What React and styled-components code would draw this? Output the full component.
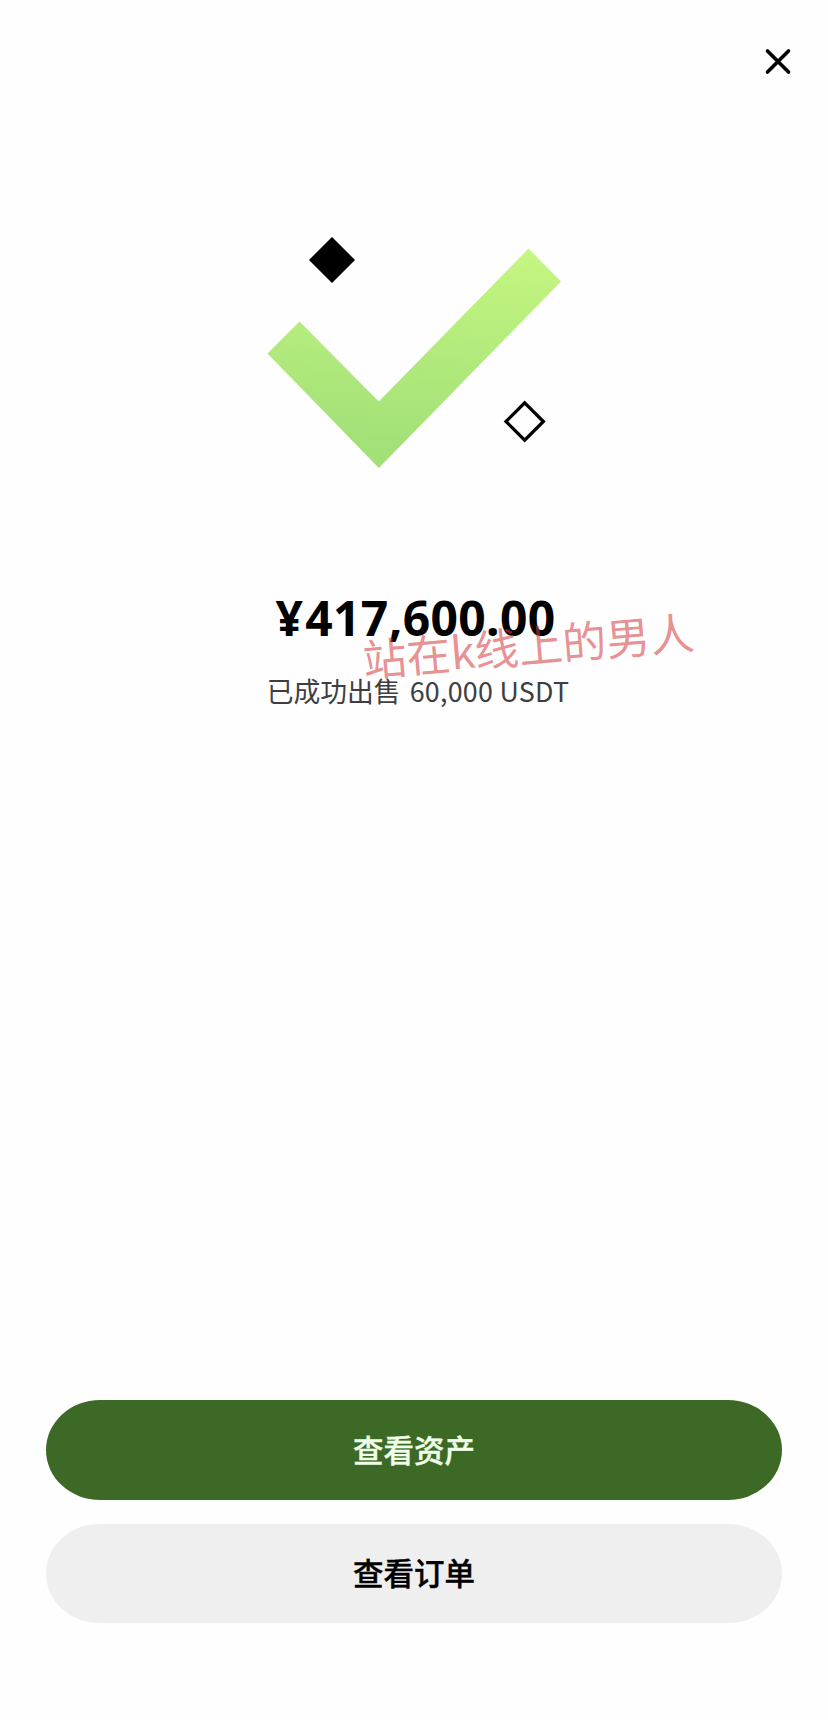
import React from "react";
import styled, { createGlobalStyle } from "styled-components";

const GlobalStyle = createGlobalStyle`
	* {
		box-sizing: border-box;
	}
	body {
		margin: 0;
		background-color: rgb(254, 254, 254);
		font-family: "Noto Sans CJK SC", sans-serif;
	}
`;

const Page = styled.main`
	display: flex;
	flex-flow: column nowrap;
	width: 828px;
	height: 1720px;
	padding: 0 46px 97px 46px;
	overflow: hidden;
`;

const Header = styled.header`
	display: flex;
	justify-content: flex-end;
	height: 222px;
	padding-top: 41px;
	margin-right: -17px;
`;

const CloseButton = styled.button`
	display: flex;
	justify-content: center;
	align-items: center;
	width: 42px;
	height: 42px;
	padding: 0;
	border: none;
	background: none;
	cursor: pointer;
`;

const Illustration = styled.svg`
	align-self: center;
	width: 340px;
	height: 260px;
`;

const Result = styled.section`
	position: relative;
	display: flex;
	flex-flow: column nowrap;
	align-items: center;
	margin-top: 106px;
`;

const Amount = styled.h1`
	margin: 0 0 0 3px;
	font-family: "Noto Sans", "Noto Sans CJK SC", sans-serif;
	font-size: 48px;
	font-weight: 700;
	line-height: 60px;
	letter-spacing: 0.35px;
	color: rgb(0, 0, 0);
`;

const Currency = styled.span`
	margin-right: 2px;
`;

const Description = styled.p`
	margin: 23px 0 0 8px;
	font-size: 26.8px;
	font-weight: 400;
	line-height: 40px;
	color: rgb(62, 62, 66);
	white-space: nowrap;
`;

const Quantity = styled.span`
	margin-left: 3px;
	letter-spacing: 0.28px;
`;

const Watermark = styled.span`
	position: absolute;
	top: 24px;
	left: 316px;
	font-size: 44px;
	font-weight: 400;
	line-height: 64px;
	white-space: nowrap;
	color: rgba(214, 62, 66, 0.58);
	transform: rotate(-4.9deg);
	pointer-events: none;
`;

const Actions = styled.footer`
	display: flex;
	flex-flow: column nowrap;
	gap: 24px;
	margin-top: auto;
`;

const ActionButton = styled.button`
	width: 100%;
	height: 99.5px;
	padding: 0 0 2px 0;
	border: none;
	border-radius: 54px / 50px;
	background-color: ${({ $primary }) => ($primary ? "rgb(60, 106, 38)" : "rgb(239, 239, 239)")};
	color: ${({ $primary }) => ($primary ? "rgb(240, 255, 232)" : "rgb(0, 0, 0)")};
	font-family: inherit;
	font-size: 30.5px;
	font-weight: 500;
	-webkit-text-stroke: 0.4px currentColor;
	cursor: pointer;
`;

function CloseIcon() {
	return (
		<svg width="30" height="30" viewBox="0 0 30 30" fill="none">
			<path d="M4.5 4 25.5 25M25.5 4 4.5 25" stroke="#000" strokeWidth="3.7" strokeLinecap="round" />
		</svg>
	);
}

function SuccessIllustration() {
	return (
		<Illustration viewBox="244 222 340 260" fill="none">
			<defs>
				<linearGradient id="tick" x1="450" y1="248" x2="435" y2="450" gradientUnits="userSpaceOnUse">
					<stop offset="0" stopColor="#c4f680" />
					<stop offset="1" stopColor="#a2e078" />
				</linearGradient>
			</defs>
			<path d="M267.5 353.5 299.5 321.5 378.8 401.5 528.5 248.5 561 281.5 378.8 468Z" fill="url(#tick)" />
			<path d="M332 237 355 260 332 283 309 260Z" fill="#000" />
			<path d="M524.7 402.8 543.4 421.5 524.7 440.2 506 421.5Z" stroke="#000" strokeWidth="3.3" />
		</Illustration>
	);
}

export default function App() {
	return (
		<>
			<GlobalStyle />
			<Page>
				<Header>
					<CloseButton aria-label="关闭">
						<CloseIcon />
					</CloseButton>
				</Header>
				<SuccessIllustration />
				<Result>
					<Amount>
						<Currency>¥</Currency>417,600.00
					</Amount>
					<Description>
						已成功出售 <Quantity>60,000 USDT</Quantity>
					</Description>
					<Watermark>站在k线上的男人</Watermark>
				</Result>
				<Actions>
					<ActionButton $primary>查看资产</ActionButton>
					<ActionButton>查看订单</ActionButton>
				</Actions>
			</Page>
		</>
	);
}
